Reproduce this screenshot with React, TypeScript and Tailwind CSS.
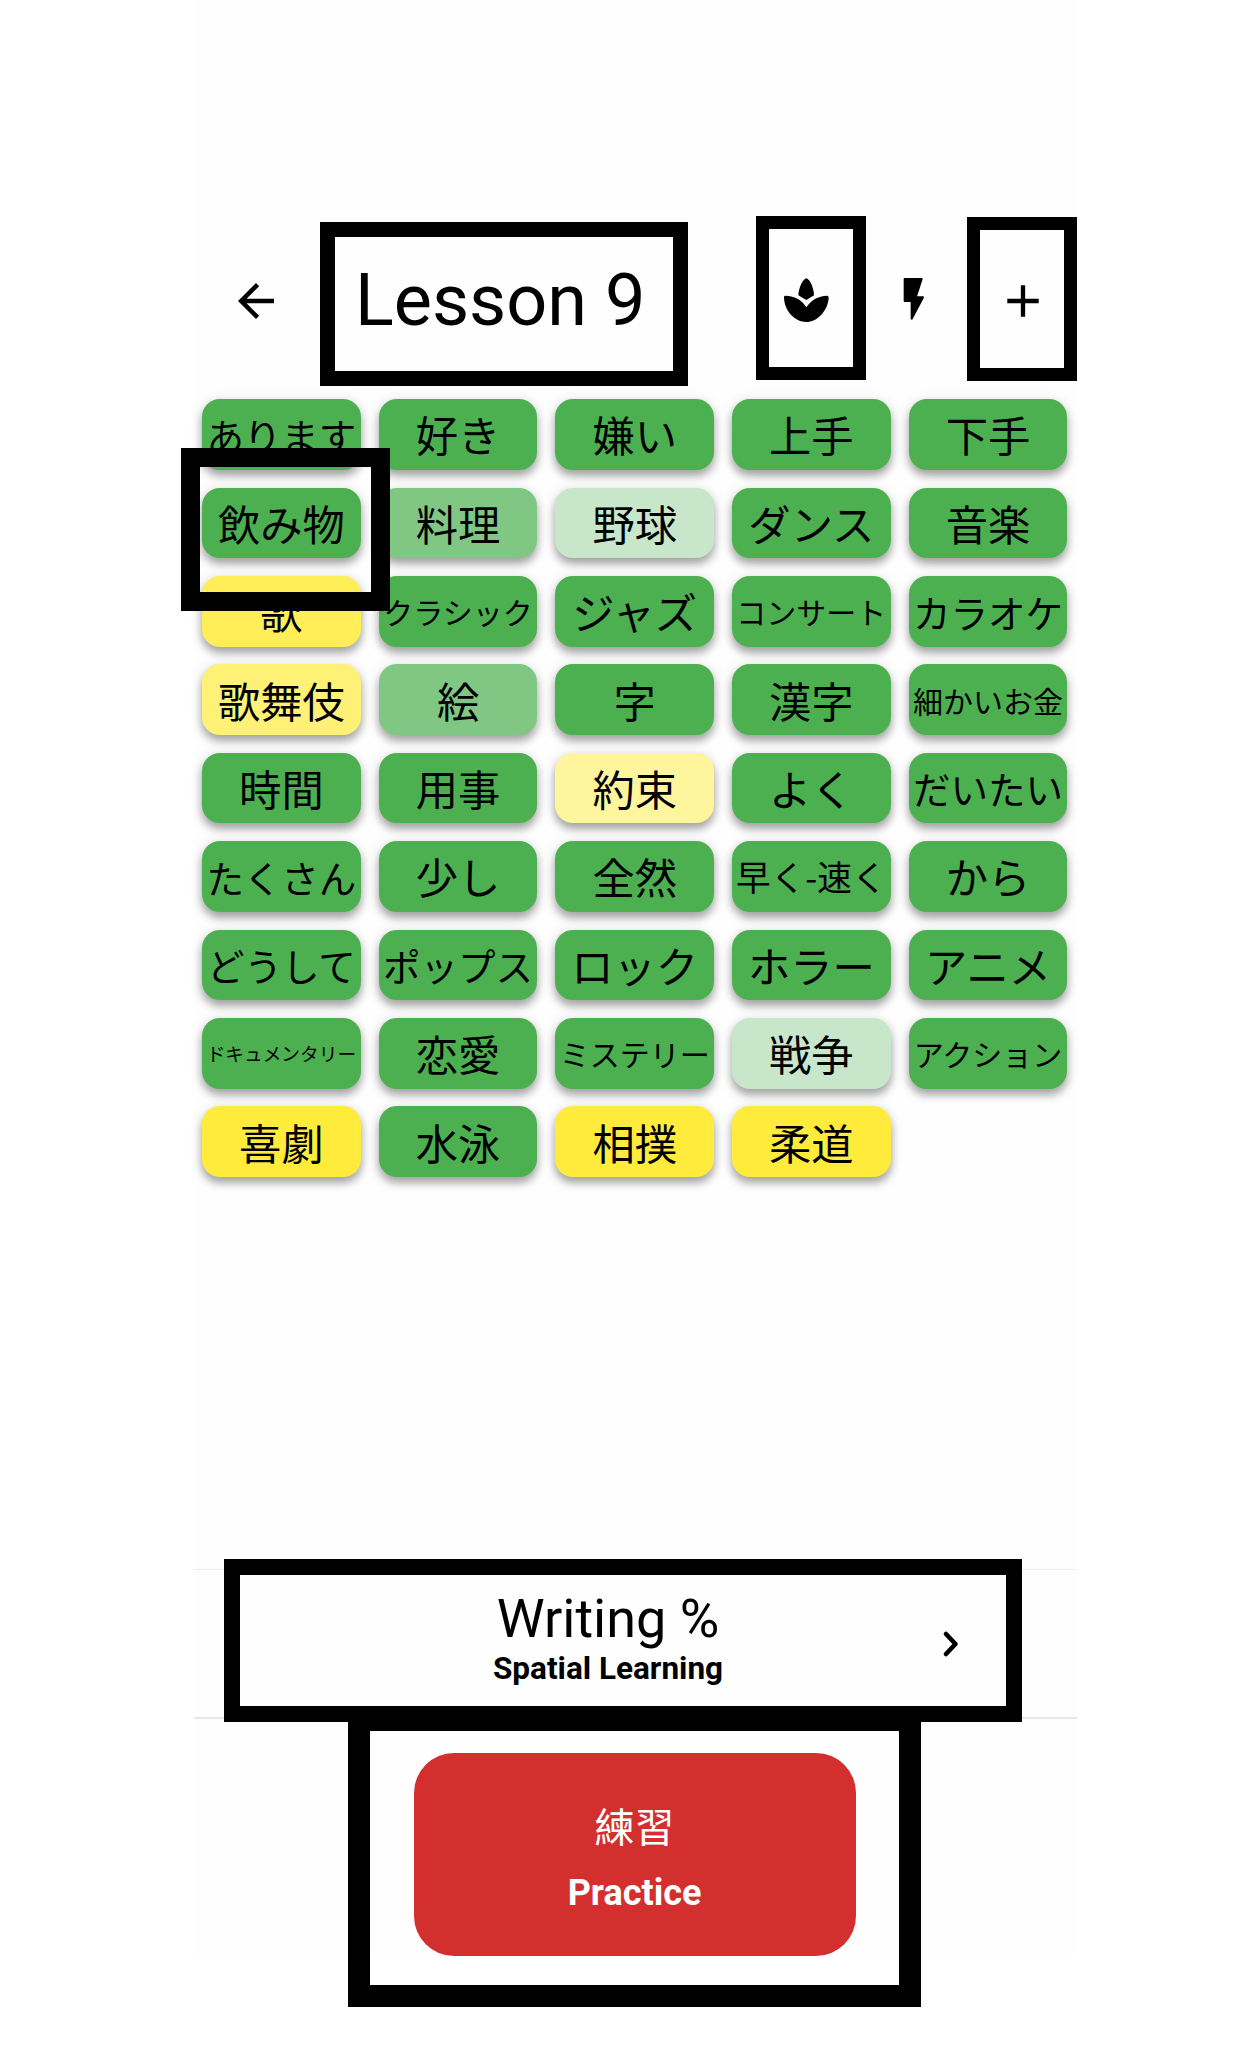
import React from "react";

type Tone = "g5" | "g3" | "g1" | "y5" | "y4" | "y3" | "y2";
type Size = "l" | "m" | "h" | "s" | "xs";

const tones: Record<Tone, string> = {
  g5: "bg-[#4cb050]",
  g3: "bg-[#81c784]",
  g1: "bg-[#c8e6c9]",
  y5: "bg-[#ffeb3b]",
  y4: "bg-[#ffee58]",
  y3: "bg-[#fff176]",
  y2: "bg-[#fff59d]",
};

const sizes: Record<Size, string> = {
  l: "text-[42.3px]",
  m: "text-[37.5px]",
  h: "text-[34.7px]",
  s: "text-[30px]",
  xs: "text-[18.7px]",
};

const words: [string, Tone?, Size?][] = [
  ["あります", "g5", "m"], ["好き"], ["嫌い"], ["上手"], ["下手"],
  ["飲み物"], ["料理", "g3"], ["野球", "g1"], ["ダンス"], ["音楽"],
  ["歌", "y4"], ["クラシック", "g5", "s"], ["ジャズ"], ["コンサート", "g5", "s"], ["カラオケ", "g5", "m"],
  ["歌舞伎", "y3"], ["絵", "g3"], ["字"], ["漢字"], ["細かいお金", "g5", "s"],
  ["時間"], ["用事"], ["約束", "y2"], ["よく"], ["だいたい", "g5", "m"],
  ["たくさん", "g5", "m"], ["少し"], ["全然"], ["早く-速く", "g5", "h"], ["から"],
  ["どうして", "g5", "m"], ["ポップス", "g5", "m"], ["ロック"], ["ホラー"], ["アニメ"],
  ["ドキュメンタリー", "g5", "xs"], ["恋愛"], ["ミステリー", "g5", "s"], ["戦争", "g1"], ["アクション", "g5", "s"],
  ["喜劇", "y5"], ["水泳"], ["相撲", "y5"], ["柔道", "y5"],
];

function Chip({ text, tone = "g5", size = "l" }: { text: string; tone?: Tone; size?: Size }) {
  return (
    <button
      className={`flex h-[70.5px] items-center justify-center rounded-[18px] leading-none whitespace-nowrap shadow-[0_6px_8px_rgba(0,0,0,0.3),0_2px_13px_rgba(0,0,0,0.13)] ${tones[tone]} ${sizes[size]}`}
    >
      {text}
    </button>
  );
}

function Header() {
  return (
    <header className="mt-[216px] flex h-[169px] items-center pl-[35px]">
      <svg className="h-[54px] w-[54px]" viewBox="0 0 24 24">
        <path d="M20 11H7.83l5.59-5.59L12 4l-8 8 8 8 1.41-1.41L7.83 13H20z" />
      </svg>
      <h1 className="ml-[72px] w-[400px] text-[72px] leading-none whitespace-nowrap">Lesson 9</h1>
      <svg className="ml-[29px] h-[45px] w-[45px]" viewBox="252 236 135 135">
        <path d="M319 237C330 240 341 265 342 288L319 302L295 288C296 265 308 240 319 237Z" />
        <path d="M256 289C285 290 308 303 319 324C332 303 354 290 382 289Q386 290 386 295C384 335 350 368 319 368C285 368 252 335 252 293Q252 289 256 289Z" />
      </svg>
      <svg className="ml-[73.5px] h-[45px] w-[22px]" viewBox="607 234 66 135">
        <path
          d="M612 237H663L645 292H667L633 356V303H612Z"
          stroke="black"
          strokeWidth="6"
          strokeLinejoin="round"
        />
      </svg>
      <svg className="ml-[82px] h-[32px] w-[32px]" viewBox="0 0 32 32">
        <path d="M16 0.3V31.7M0.3 16H31.7" stroke="black" strokeWidth="4.3" />
      </svg>
    </header>
  );
}

export default function App() {
  return (
    <div className="relative h-[2048px] w-[1255px] overflow-hidden bg-white font-['Roboto','Noto_Sans_CJK_JP',sans-serif] text-black">
      <main className="ml-[194px] flow-root w-[883px] bg-[#fefefe]">
        <Header />
        <section className="mt-[14.3px] ml-[8px] grid h-[778px] w-[865.4px] auto-rows-[70.5px] grid-cols-5 gap-[17.9px] font-['Noto_Sans_CJK_JP',sans-serif]">
          {words.map(([text, tone, size]) => (
            <Chip key={text} text={text} tone={tone} size={size} />
          ))}
        </section>
        <section className="mt-[391.7px] flex h-[150px] items-center border-t border-b-2 border-t-[#ededed] border-b-[#e8e8e8]">
          <div className="ml-[264px] flex w-[300px] flex-col items-center pb-[8px]">
            <span className="text-[54px] leading-[58px] whitespace-nowrap">Writing %</span>
            <span className="pt-[2px] text-[31.5px] leading-[38px] font-bold whitespace-nowrap">Spatial Learning</span>
          </div>
          <svg className="mt-[2px] ml-[182px] h-[30px] w-[24px] fill-none" viewBox="0 0 24 30">
            <path d="M6 5L15.5 15L6 25" stroke="black" strokeWidth="4.6" strokeLinecap="round" strokeLinejoin="round" />
          </svg>
        </section>
        <button className="mt-[34px] ml-[219.5px] flex h-[203px] w-[442px] flex-col items-center rounded-[40px] bg-[#d32f2f] pt-[52px] text-white">
          <span className="font-['Noto_Sans_CJK_SC',sans-serif] text-[40px] leading-[40px]">練習</span>
          <span className="mt-[28px] text-[36px] leading-[40px] font-bold">Practice</span>
        </button>
      </main>

      {/* callout frames */}
      <div className="absolute top-[222px] left-[320px] h-[164px] w-[368px] border-[15px] border-black" />
      <div className="absolute top-[216px] left-[756px] h-[164px] w-[110px] border-[13px] border-black" />
      <div className="absolute top-[217px] left-[967px] h-[164px] w-[110px] border-[13px] border-black" />
      <div className="absolute top-[448px] left-[181px] h-[163px] w-[209px] border-[19px] border-black" />
      <div className="absolute top-[1559px] left-[224px] h-[163px] w-[798px] border-[16px] border-black" />
      <div className="absolute top-[1709px] left-[348px] h-[298px] w-[573px] border-[22px] border-black" />
    </div>
  );
}
